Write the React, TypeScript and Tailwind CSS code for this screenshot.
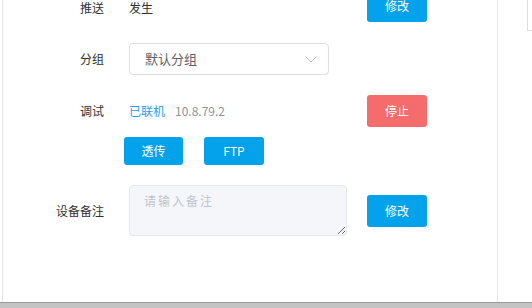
const font = { fontFamily: '"Noto Sans CJK SC", "Noto Sans", sans-serif' };

function Btn({ children, danger = false }: { children: React.ReactNode; danger?: boolean }) {
  return (
    <button
      className={`flex h-[32px] w-[60px] items-center justify-center rounded-[3px] text-[12px] text-white ${
        danger ? "bg-[#f56c6c]" : "bg-[#03a2ea]"
      }`}
    >
      {children}
    </button>
  );
}

function Label({ children, className = "" }: { children: React.ReactNode; className?: string }) {
  return (
    <div className={`w-[101px] shrink-0 text-right text-[12px] leading-none text-[#303133] ${className}`}>
      {children}
    </div>
  );
}

export default function App() {
  return (
    <div className="flex h-[308px] w-[532px] flex-col overflow-hidden bg-white" style={font}>
      <div className="flex h-[302px]">
        <div className="w-[2px] shrink-0" />
        <div className="flex w-[496px] shrink-0 flex-col border-x border-[#e6e6e6]">
          <div className="-mt-[10px] flex flex-col">
            {/* 推送 */}
            <div className="flex h-[32px] items-center">
              <Label className="mt-[4px]">推送</Label>
              <div className="ml-[25px] mt-[4px] w-[238px] text-[12px] leading-none text-[#303133]">发生</div>
              <Btn>修改</Btn>
            </div>

            {/* 分组 */}
            <div className="mt-[21px] flex h-[32px] items-center">
              <Label>分组</Label>
              <div className="ml-[25px] w-[238px]">
                <div className="flex h-[32px] w-[200px] items-center justify-between rounded-[4px] border border-[#dcdfe6] pl-[15px] pr-[11px]">
                  <span className="text-[13px] text-[#606266]">默认分组</span>
                  <svg width="12" height="7" viewBox="0 0 12 7" fill="none">
                    <path d="M0.5 0.5 L6 6 L11.5 0.5" stroke="#c0c4cc" strokeWidth="1" />
                  </svg>
                </div>
              </div>
            </div>

            {/* 调试 */}
            <div className="mt-[20px] flex h-[32px] items-center">
              <Label>调试</Label>
              <div className="ml-[25px] flex w-[238px] items-center gap-[10px] text-[12px]">
                <span className="text-[#2a9df4]">已联机</span>
                <span className="text-[#909399]">10.8.79.2</span>
              </div>
              <Btn danger>停止</Btn>
            </div>

            <div className="mt-[10px] flex gap-[21px] pl-[121px]">
              <button className="flex h-[28px] w-[59px] items-center justify-center rounded-[3px] bg-[#03a2ea] text-[12px] text-white">
                透传
              </button>
              <button className="flex h-[28px] w-[60px] items-center justify-center rounded-[3px] bg-[#03a2ea] text-[12px] text-white">
                FTP
              </button>
            </div>

            {/* 设备备注 */}
            <div className="mt-[20px] flex items-center">
              <Label>设备备注</Label>
              <div className="ml-[25px] w-[238px]">
                <textarea
                  placeholder="请输入备注"
                  className="block h-[51px] w-[218px] rounded-[4px] border border-[#e4e7ed] bg-[#f5f6fa] px-[14px] pt-[6px] text-[12px] tracking-[2px] text-[#606266] outline-none placeholder:text-[#c0c4cc]"
                  style={font}
                />
              </div>
              <Btn>修改</Btn>
            </div>
          </div>
        </div>
        <div className="flex flex-1 justify-end">
          <div className="h-[31px] w-[5px] border-b border-l border-[#dcdfe6]" />
        </div>
      </div>
      <div className="h-[6px] border-t border-[#9a9a9a] bg-[#c4c4c4]" />
    </div>
  );
}
